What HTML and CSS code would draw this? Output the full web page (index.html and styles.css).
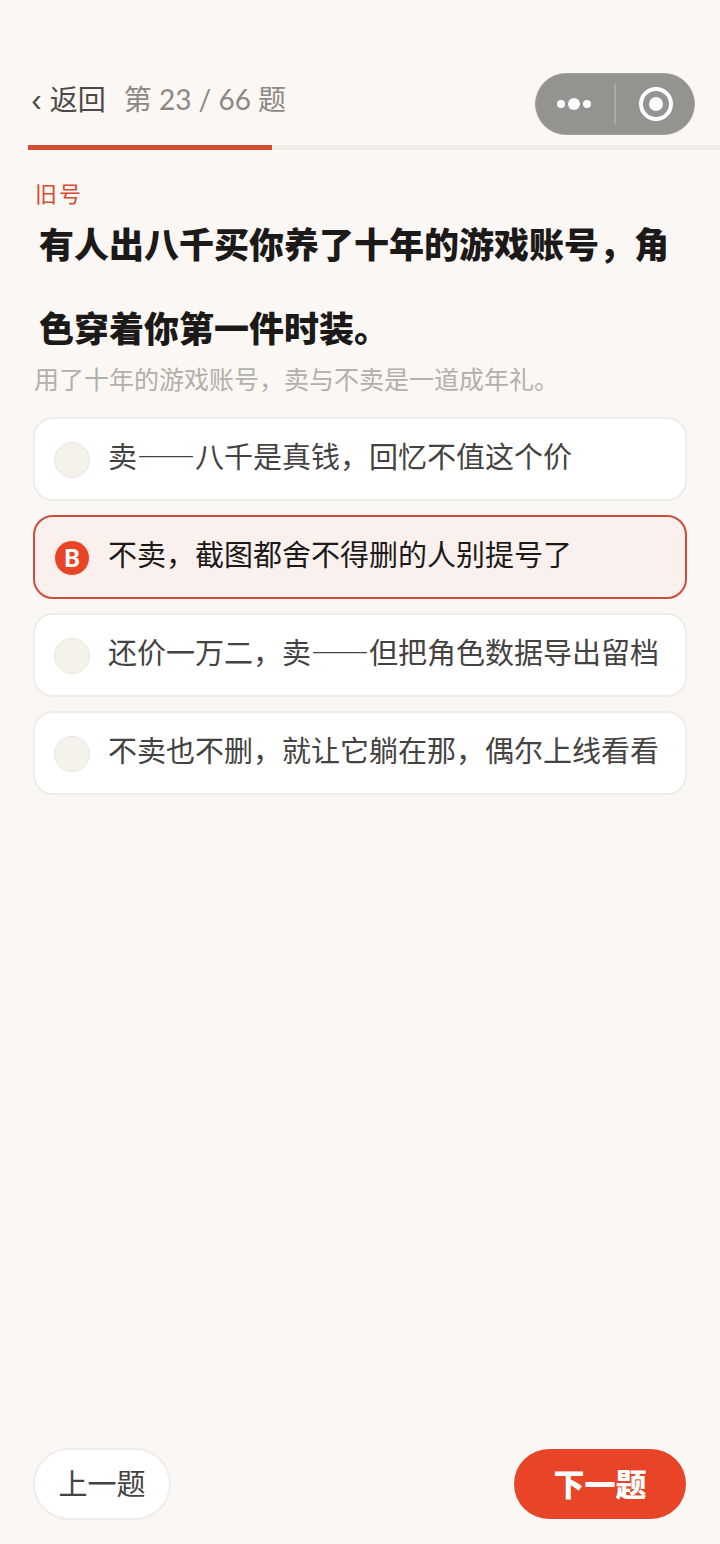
FILE: index.html
```html
<!DOCTYPE html>
<html lang="zh-CN">
<head>
<meta charset="utf-8" />
<meta name="viewport" content="width=device-width, initial-scale=1">
<title>旧号</title>
<link rel="stylesheet" href="styles.css">
</head>

<body>
    <header class="topbar">
        <button class="back" type="button"><span class="chevron">‹</span>返回</button>
        <span class="count">第 23 / 66 题</span>
        <div class="capsule">
            <button type="button" aria-label="更多">
                <svg width="36" height="36" viewBox="0 0 36 36" fill="#fff">
                    <circle cx="4" cy="18" r="4" />
                    <circle cx="17" cy="18" r="6" />
                    <circle cx="30" cy="18" r="4" />
                </svg>
            </button>
            <button type="button" aria-label="关闭">
                <svg width="36" height="36" viewBox="0 0 36 36">
                    <circle cx="19" cy="18" r="15" fill="none" stroke="#fff" stroke-width="4" />
                    <circle cx="19" cy="18" r="7" fill="#fff" />
                </svg>
            </button>
        </div>
    </header>

    <div class="progress">
        <div class="progress-fill" style="width: 35.3%"></div>
    </div>

    <main>
        <div class="tag">旧号</div>
        <h1>有人出八千买你养了十年的游戏账号，角色穿着你第一件时装。</h1>
        <p class="hint">用了十年的游戏账号，卖与不卖是一道成年礼。</p>

        <form class="options">
            <label class="option">
                <span class="mark"><input type="radio" name="answer" value="A"></span>
                <span class="text">卖——八千是真钱，回忆不值这个价</span>
            </label>
            <label class="option selected">
                <span class="mark"><input type="radio" name="answer" value="B" checked><b>B</b></span>
                <span class="text">不卖，截图都舍不得删的人别提号了</span>
            </label>
            <label class="option">
                <span class="mark"><input type="radio" name="answer" value="C"></span>
                <span class="text">还价一万二，卖——但把角色数据导出留档</span>
            </label>
            <label class="option">
                <span class="mark"><input type="radio" name="answer" value="D"></span>
                <span class="text">不卖也不删，就让它躺在那，偶尔上线看看</span>
            </label>
        </form>
    </main>

    <footer>
        <button class="prev" type="button">上一题</button>
        <button class="next" type="button">下一题</button>
    </footer>
</body>
</html>
```
FILE: styles.css
```css
* {
    box-sizing: border-box;
}
body {
    margin: 0;
    min-height: 100vh;
    display: flex;
    flex-direction: column;
    background: #fbf7f4;
    color: #1c1a18;
    font-family: "Noto Sans CJK SC", sans-serif;
}
button {
    margin: 0;
    padding: 0;
    border: 0;
    background: none;
    font-family: inherit;
    cursor: pointer;
}

/* top bar */
.topbar {
    display: flex;
    align-items: flex-start;
    padding: 73px 25px 10px 31px;
}
.back {
    display: flex;
    gap: 8px;
    color: #4d4946;
    font-size: 28px;
    line-height: 50px;
}
.chevron {
    font-family: Inter, sans-serif;
    line-height: 56px;
}
.count {
    margin-left: 18px;
    color: #8c8884;
    font-family: Lato, "Noto Sans CJK SC", sans-serif;
    font-size: 28px;
    line-height: 52px;
}
.capsule {
    display: flex;
    align-items: center;
    width: 160px;
    height: 62px;
    margin-left: auto;
    border: 1px solid #a5a29f;
    border-radius: 31px;
    background: #959390;
}
.capsule button {
    flex: 1;
    display: flex;
    justify-content: center;
    height: 40px;
    align-items: center;
}
.capsule button + button {
    border-left: 2px solid #adaaa7;
}

.progress {
    height: 5px;
    margin-left: 28px;
    background: #f0ece7;
}
.progress-fill {
    height: 100%;
    background: #d94a32;
}

/* question */
main {
    padding: 25px 33px;
}
.tag {
    padding-left: 2px;
    color: #d94a32;
    font-size: 22px;
    letter-spacing: 2px;
    line-height: 34px;
}
h1 {
    margin: 0;
    padding: 0 6px;
    font-size: 35px;
    font-weight: 900;
    line-height: 84px;
    margin-top: -8px;
}
.hint {
    margin: -9px 0 21px;
    padding-left: 1px;
    color: #b3afab;
    font-size: 25px;
    line-height: 36px;
}

/* answers */
.options {
    display: flex;
    flex-direction: column;
    gap: 14px;
}
.option {
    display: flex;
    align-items: center;
    gap: 18px;
    min-height: 84px;
    padding: 0 19px;
    border: 2px solid #f0ece7;
    border-radius: 20px;
    background: #fff;
    color: #454341;
    font-size: 29px;
    line-height: 40px;
    cursor: pointer;
}
.option.selected {
    border-color: #cf4c38;
    background: #faf0ee;
    color: #1c1a18;
}
.option .text {
    padding-bottom: 8px;
}
.mark {
    display: grid;
    place-items: center;
    padding-top: 2px;
}
.mark input, .mark b {
    grid-area: 1 / 1;
}
.mark input {
    appearance: none;
    width: 36px;
    height: 36px;
    margin: 0;
    border: 1px solid #e9e5de;
    border-radius: 50%;
    background: #f5f2eb;
}
.mark input:checked {
    border-color: #faf0ee;
    background: #e84528;
}
.mark b {
    color: #fff;
    font-family: Lato, sans-serif;
    font-size: 24px;
    font-weight: 900;
    line-height: 36px;
}

/* bottom buttons */
footer {
    display: flex;
    align-items: center;
    justify-content: space-between;
    margin-top: auto;
    padding: 0 34px 24px 33px;
}
.prev, .next {
    padding-bottom: 4px;
}
.prev {
    width: 138px;
    height: 72px;
    border: 2px solid #f0ece9;
    border-radius: 36px;
    background: #fff;
    color: #454341;
    font-size: 29px;
}
.next {
    width: 172px;
    height: 70px;
    border-radius: 35px;
    background: #e84528;
    color: #fff;
    font-size: 31px;
    font-weight: 900;
}
```
